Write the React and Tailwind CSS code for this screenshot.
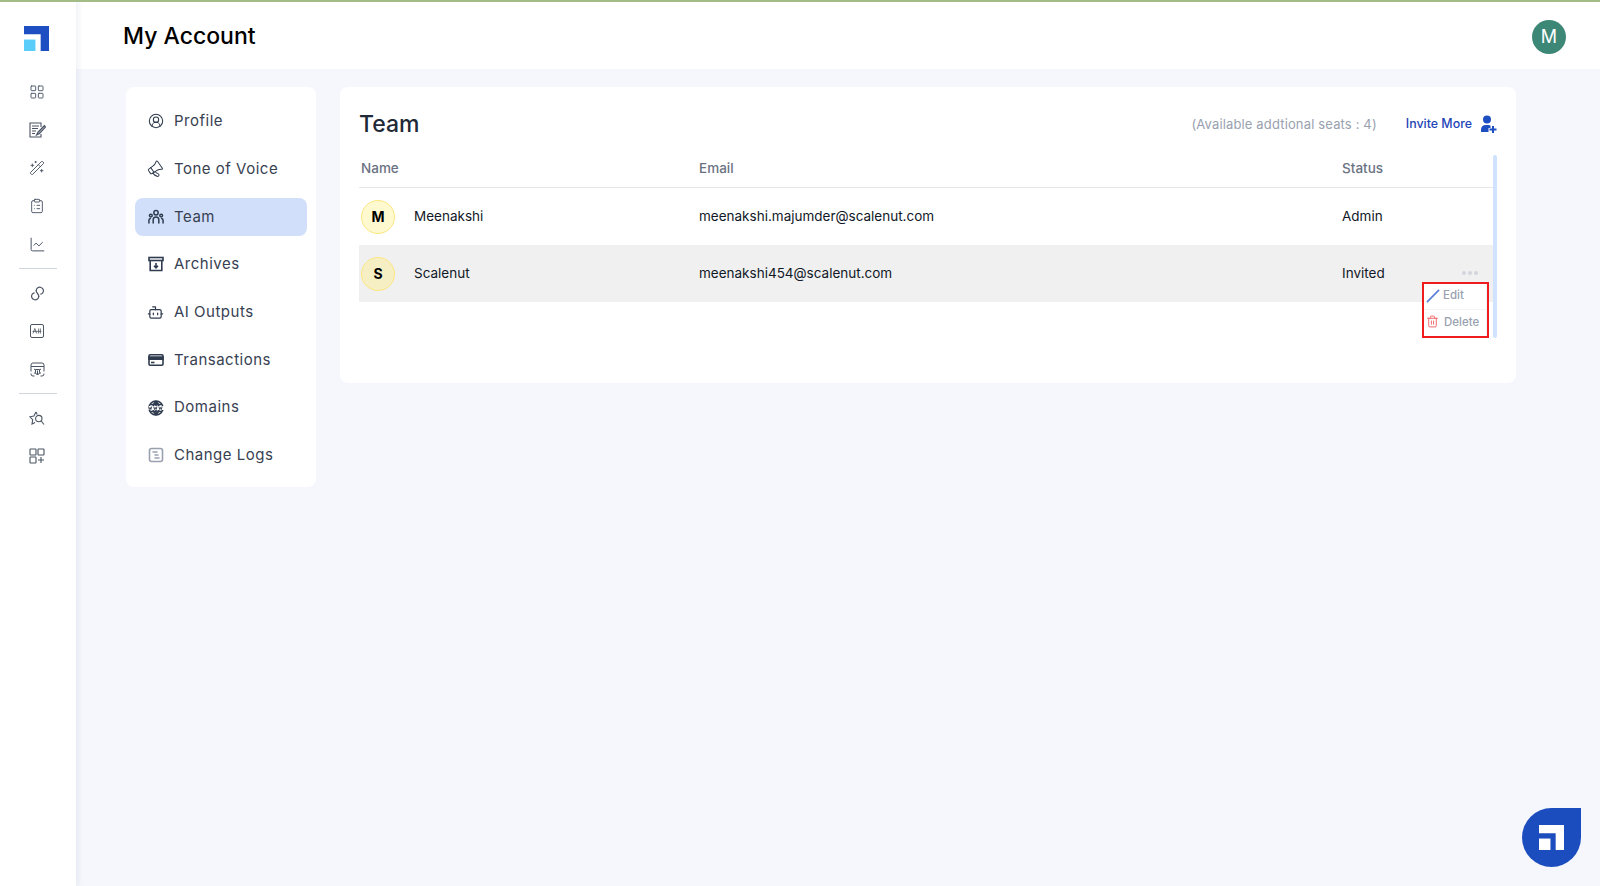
import {
  Bot,
  ChartLine,
  CircleUserRound,
  ClipboardList,
  LayoutGrid,
  Megaphone,
  Trash2,
  WandSparkles,
} from 'lucide-react'

function TeamIcon(props) {
  return (
    <svg width="16" height="16" viewBox="0 0 17 17" fill="none" stroke="currentColor" strokeWidth="1.3" strokeLinecap="round" {...props}>
      <circle cx="8.500" cy="4" r="2.300" />
      <circle cx="3" cy="7" r="1.500" />
      <circle cx="14" cy="7" r="1.500" />
      <path d="M5.500 15v-3.500a3 3 0 0 1 6 0V15M1 15v-3a2 2 0 0 1 1.500-2M16 15v-3a2 2 0 0 0-1.500-2" />
    </svg>
  )
}

function ArchiveDownIcon(props) {
  return (
    <svg width="16" height="16" viewBox="0 0 16 16" fill="none" stroke="currentColor" strokeWidth="1" {...props}>
      <rect x="1" y="1.500" width="14" height="3" />
      <path d="M2.200 4.500V14.500h11.600V4.500M8 7v4.500M6 9.800l2 2 2-2" />
    </svg>
  )
}

function DomainIcon(props) {
  return (
    <svg width="16" height="16" viewBox="0 0 16 16" fill="none" stroke="currentColor" strokeWidth="1" {...props}>
      <circle cx="8" cy="8" r="7" />
      <path d="M8 1c-4 3.500-4 10.500 0 14M8 1c4 3.500 4 10.500 0 14M8 1v14M2 4.500h12M2 11.500h12" />
      <path d="M0 6h16v4H0z" fill="#ffffff" stroke="none" />
      <path d="M.5 6.500l.8 3 .8-2 .8 2 .8-3M5.700 6.500l.8 3 .8-2 .8 2 .8-3M10.900 6.500l.8 3 .8-2 .8 2 .8-3" strokeWidth="0.900" />
    </svg>
  )
}

function ChangeLogIcon(props) {
  return (
    <svg width="16" height="16" viewBox="0 0 16 16" fill="none" stroke="currentColor" strokeWidth="1" {...props}>
      <rect x="1.500" y="1.500" width="13" height="13" rx="2" />
      <path d="M4.500 5h5M6.500 8h4M6.500 11h5" />
    </svg>
  )
}

function CardIcon(props) {
  return (
    <svg width="16" height="16" viewBox="0 0 16 16" fill="none" stroke="currentColor" strokeWidth="1.300" {...props}>
      <rect x="1" y="2.700" width="14" height="10.600" rx="1.200" />
      <path d="M1 5h14v2.200H1z" fill="currentColor" />
      <path d="M3 10.500h3.500" />
    </svg>
  )
}

function BotIcon(props) {
  return <Bot size={17} strokeWidth={1.7} className={props.className} />
}

function MegaphoneIcon(props) {
  return <Megaphone size={17} strokeWidth={1.4} className={`-rotate-[35deg] ${props.className}`} />
}

const menuItems = [
  { label: 'Profile', icon: CircleUserRound },
  { label: 'Tone of Voice', icon: MegaphoneIcon },
  { label: 'Team', icon: TeamIcon, active: true },
  { label: 'Archives', icon: ArchiveDownIcon },
  { label: 'AI Outputs', icon: BotIcon },
  { label: 'Transactions', icon: CardIcon },
  { label: 'Domains', icon: DomainIcon },
  { label: 'Change Logs', icon: ChangeLogIcon, light: true },
]

function DocPenIcon() {
  return (
    <svg width="17" height="16" viewBox="0 0 17 16" fill="none" stroke="#4b5563" strokeWidth="1.100">
      <path d="M12 5V1H1v14h11v-3" />
      <path d="M3 4h7M3 6.500h6M3 9h4M3 11.500h3" />
      <path d="M15.500 3.500 9 10l-1.500 3 3-1.500L16.500 5z" fill="#9ca3af" />
    </svg>
  )
}

function RingsIcon() {
  return (
    <svg width="15" height="15" viewBox="0 0 15 15" fill="none" stroke="#4b5563" strokeWidth="1.200" strokeLinecap="round">
      <path d="M6.200 4.700a3.500 3.500 0 0 1 4.900-3.200 3.500 3.500 0 0 1 1.900 5c-.5.900-1.300 1.500-2.200 1.700" />
      <path d="M8.800 10.300a3.500 3.500 0 0 1-4.900 3.200 3.500 3.500 0 0 1-1.900-5c.5-.900 1.300-1.500 2.200-1.700" />
      <path d="M6.200 4.700c0 1 .5 2 1.400 2.600M8.800 10.300c0-1-.5-2-1.400-2.600" />
    </svg>
  )
}

function AiBoxIcon() {
  return (
    <svg width="14" height="14" viewBox="0 0 14 14" fill="none" stroke="#4b5563" strokeWidth="1">
      <rect x="0.500" y="0.500" width="13" height="13" rx="1.500" />
      <path d="M3 9.500 4.800 4.500 6.600 9.500M2.500 7.400h8.800M8.600 4.500v5M10.400 4.500v5" strokeWidth="0.800" />
    </svg>
  )
}

function BrowserBugIcon() {
  return (
    <svg width="15" height="15" viewBox="0 0 15 15" fill="none" stroke="#4b5563" strokeWidth="1">
      <path d="M1 9.500V3a2 2 0 0 1 2-2h9a2 2 0 0 1 2 2v6.500M1 4.500h13M1 11.500V12a2 2 0 0 0 2 2h1.500M14 11.500V12a2 2 0 0 1-2 2h-1.500" />
      <path d="M5.500 7.500h4v3a2 2 0 0 1-4 0zM4 7l1.500 1M11 7 9.500 8M4 11h1.500M11 11H9.500M7.500 8.500V12.500" />
    </svg>
  )
}

function StarSearchIcon() {
  return (
    <svg width="16" height="15" viewBox="0 0 16 15" fill="none" stroke="#4b5563" strokeWidth="1.100">
      <path d="M7 1 4.900 5 .8 5.800 3.700 8.700 3 13 6 11.500M7 1l1.200 2.400" />
      <circle cx="9.800" cy="7.600" r="3.200" />
      <path d="m12.200 10 2.800 3.500" />
    </svg>
  )
}

function SquaresPlusIcon() {
  return (
    <svg width="16" height="16" viewBox="0 0 16 16" fill="none" stroke="#4b5563" strokeWidth="1.100">
      <rect x="1" y="1" width="6" height="6" rx="0.500" />
      <rect x="9" y="1" width="6" height="6" rx="0.500" />
      <rect x="1" y="9" width="6" height="6" rx="0.500" />
      <path d="M12 9v6M9 12h6" />
    </svg>
  )
}

function PersonPlusIcon() {
  return (
    <svg width="17" height="18" viewBox="0 0 17 18" fill="#1e4fc2">
      <circle cx="7" cy="4.500" r="4" />
      <path d="M1 17v-2.500A4.500 4.500 0 0 1 5.500 10h3a4.500 4.500 0 0 1 2 .5V13H8.500v4z" />
      <path d="M12 11h2v2.500h2.500v2H14V18h-2v-2.500H9.500v-2H12z" />
    </svg>
  )
}

function LogoMark({ outer, inner, size }) {
  return (
    <svg width={size} height={size} viewBox="0 0 24 24">
      <path d="M0 0h24v24h-8V8H0z" fill={outer} />
      <rect x="0" y="13" width="11" height="11" fill={inner} />
    </svg>
  )
}

function RailIcon({ children }) {
  return <div className="flex h-[38px] items-center justify-center pr-[2px] text-gray-600">{children}</div>
}

function Sidebar() {
  return (
    <aside className="z-10 flex w-[76px] shrink-0 flex-col items-center bg-white pt-[26px] shadow-[2px_0_6px_rgba(30,50,110,0.08)]">
      <div className="ml-[-4px]">
        <LogoMark outer="#1e4fc2" inner="#5bcdfb" size={25} />
      </div>
      <div className="mt-[22px] flex w-full flex-col">
        <RailIcon><LayoutGrid size={16} strokeWidth={1.4} /></RailIcon>
        <RailIcon><DocPenIcon /></RailIcon>
        <RailIcon><WandSparkles size={16} strokeWidth={1.4} /></RailIcon>
        <RailIcon><ClipboardList size={16} strokeWidth={1.4} /></RailIcon>
        <RailIcon><ChartLine size={17} strokeWidth={1.4} /></RailIcon>
      </div>
      <div className="my-[5px] h-px w-[38px] bg-gray-300" />
      <div className="flex w-full flex-col">
        <RailIcon><RingsIcon /></RailIcon>
        <RailIcon><AiBoxIcon /></RailIcon>
        <RailIcon><BrowserBugIcon /></RailIcon>
      </div>
      <div className="my-[5px] h-px w-[38px] bg-gray-300" />
      <div className="flex w-full flex-col">
        <RailIcon><StarSearchIcon /></RailIcon>
        <RailIcon><SquaresPlusIcon /></RailIcon>
      </div>
    </aside>
  )
}

function MenuCard() {
  return (
    <nav className="flex h-[400px] w-[190px] shrink-0 flex-col gap-[9.700px] rounded-lg bg-white px-[9px] pt-[15.400px]">
      {menuItems.map((item) => {
        const Icon = item.icon
        return (
          <div
            key={item.label}
            className={`flex h-[38px] items-center rounded-lg pl-[12px] text-[15px] tracking-[0.5px] text-[#374151] ${item.active ? 'bg-[#d1dffa]' : ''}`}
          >
            <div className="mr-[10px] flex w-[17px] justify-center">
              <Icon size={16} strokeWidth={1.6} className={item.light ? 'text-gray-400' : 'text-[#2f3b4e]'} />
            </div>
            {item.label}
          </div>
        )
      })}
    </nav>
  )
}

function Avatar({ letter, tone }) {
  return (
    <div className={`flex h-[34px] w-[34px] items-center justify-center rounded-full border border-[#fbe77f] text-sm font-bold text-black ${tone}`}>
      {letter}
    </div>
  )
}

function TeamRow({ letter, name, email, status, tone, rowClass, children }) {
  return (
    <div className={`relative grid h-[57px] grid-cols-[338px_643px_1fr] items-center pl-[2px] text-[13.500px] text-[#111827] ${rowClass}`}>
      <div className="flex items-center gap-[19px]">
        <Avatar letter={letter} tone={tone} />
        {name}
      </div>
      <div>{email}</div>
      <div>{status}</div>
      {children}
    </div>
  )
}

function RowMenu() {
  return (
    <>
      <div className="absolute top-[26px] right-[15px] flex gap-[2px]">
        <span className="h-[4px] w-[4px] rounded-full bg-gray-300" />
        <span className="h-[4px] w-[4px] rounded-full bg-gray-300" />
        <span className="h-[4px] w-[4px] rounded-full bg-gray-300" />
      </div>
      <div className="absolute top-[37px] right-[4px] z-10 h-[56px] w-[67px] border-2 border-[#ee1c1c] bg-white text-[11.500px] font-medium text-gray-400">
        <div className="flex h-[26px] items-center gap-[3px] border-r border-b border-gray-100 pb-[1px] pl-[2px]">
          <svg width="14" height="14" viewBox="0 0 15 15" fill="none">
            <path d="M1 14 14 1" stroke="#5b7fd6" strokeWidth="1.800" />
          </svg>
          Edit
        </div>
        <div className="flex h-[26px] items-center gap-[5px] border-r border-gray-100 pl-[2px]">
          <Trash2 size={13} strokeWidth={1.7} className="mt-[-3px] text-[#ee6060]" />
          Delete
        </div>
      </div>
    </>
  )
}

function TeamCard() {
  return (
    <section className="h-[296px] flex-1 rounded-lg bg-white pt-[19px] pr-[19px] pl-[19px]">
      <div className="flex h-[36px] items-center justify-between">
        <h2 className="text-[23px] font-medium text-[#1f2937]">Team</h2>
        <div className="flex items-center text-[13px]">
          <span className="pt-[1px] tracking-[0.15px] text-gray-400">(Available addtional seats : 4)</span>
          <span className="ml-[29px] text-[12.400px] font-medium text-[#1e45b8]">Invite More</span>
          <div className="ml-[8px]"><PersonPlusIcon /></div>
        </div>
      </div>
      <div className="mt-[13px] flex">
        <div className="flex-1">
          <div className="grid h-[33px] grid-cols-[338px_643px_1fr] items-center border-b border-gray-200 pb-[5px] pl-[2px] text-[13.500px] font-medium text-gray-500">
            <div>Name</div>
            <div>Email</div>
            <div>Status</div>
          </div>
          <TeamRow letter="M" name="Meenakshi" email="meenakshi.majumder@scalenut.com" status="Admin" tone="bg-[#fff9cf]" />
          <TeamRow letter="S" name="Scalenut" email="meenakshi454@scalenut.com" status="Invited" tone="bg-[#f7efc4]" rowClass="bg-[#f0f0f0]">
            <RowMenu />
          </TeamRow>
        </div>
        <div className="h-[183px] w-[4px] rounded-sm bg-[#cfe2ff]" />
      </div>
    </section>
  )
}

export default function App() {
  return (
    <div className="relative flex h-screen overflow-hidden bg-[#f5f7fc] font-['Inter',sans-serif]">
      <div className="absolute inset-x-0 top-0 z-20 h-[2px] bg-[#a3bb85]" />
      <Sidebar />
      <div className="flex flex-1 flex-col">
        <header className="flex h-[69px] shrink-0 items-center justify-between bg-white pt-[4px] pr-[34px] pl-[47px]">
          <h1 className="text-[23px] font-medium text-black">My Account</h1>
          <div className="flex h-[34px] w-[34px] items-center justify-center rounded-full bg-[#3d8777] text-lg text-white">M</div>
        </header>
        <main className="flex gap-[24px] pt-[18px] pl-[50px] pr-[84px]">
          <MenuCard />
          <TeamCard />
        </main>
      </div>
      <button className="absolute right-[19px] bottom-[19px] flex h-[59px] w-[59px] items-center justify-center rounded-full rounded-tr-none bg-[#1c4dbf]">
        <LogoMark outer="#ffffff" inner="#ffffff" size={25} />
      </button>
    </div>
  )
}
